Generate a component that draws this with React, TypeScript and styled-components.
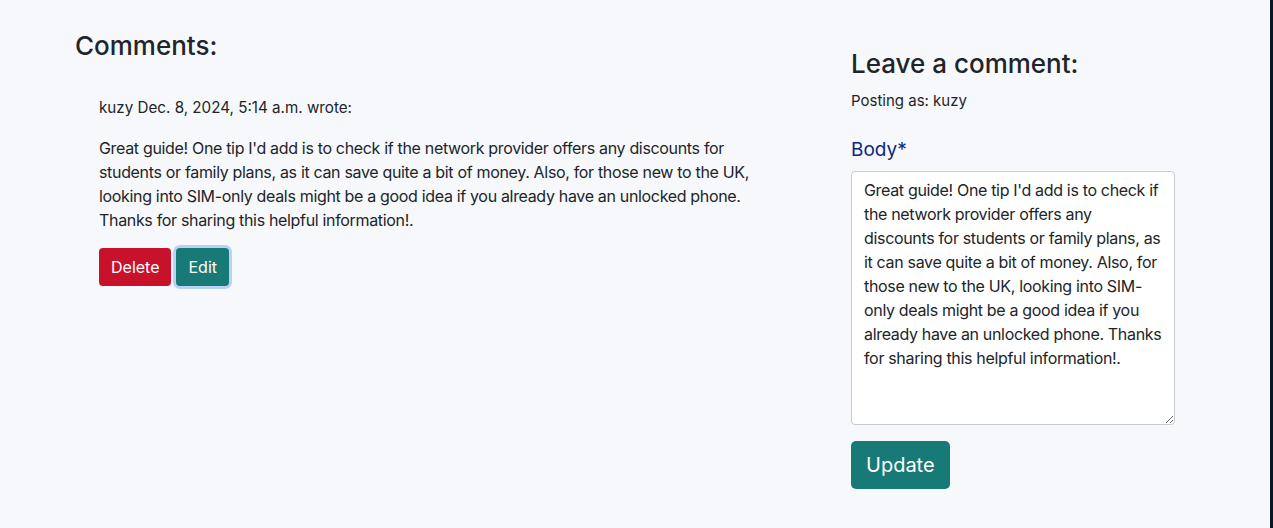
import React from "react";
import styled, { createGlobalStyle } from "styled-components";

const Global = createGlobalStyle`
  html, body { margin: 0; padding: 0; }
  body {
    background: #f7f8fc;
    font-family: Inter, "Liberation Sans", Arial, sans-serif;
    color: #212529;
    height: 528px;
    overflow: hidden;
  }
`;

const Page = styled.div`
  display: flex;
  height: 528px;
  box-sizing: border-box;
  border-right: 3px solid #0b1620;
`;

const Left = styled.section`
  width: 851px;
  padding: 30px 0 0 75px;
  box-sizing: border-box;
`;

const Right = styled.section`
  width: 324px;
  padding-top: 48px;
  box-sizing: border-box;
`;

const Heading = styled.h3`
  margin: 0;
  font-size: 26px;
  font-weight: 500;
  line-height: 1.2;
  color: #212529;
`;

const Comment = styled.div`
  padding: 35px 0 0 24px;
`;

const Meta = styled.p`
  margin: 0 0 16px;
  font-size: 15.2px;
  line-height: 24px;
`;

const Body = styled.p`
  margin: 0 0 16px;
  font-size: 16px;
  line-height: 24px;
  letter-spacing: -0.33px;
  max-width: 684px;
`;

const Actions = styled.div`
  display: flex;
  gap: 5px;
`;

const Btn = styled.button<{ $variant: "danger" | "teal"; $focus?: boolean }>`
  font-family: inherit;
  font-size: 16px;
  line-height: 24px;
  padding: 7px 12px;
  border: none;
  border-radius: 4px;
  color: #fff;
  background: ${(p) => (p.$variant === "danger" ? "#c8122c" : "#177a76")};
  box-shadow: ${(p) => (p.$focus ? "0 0 0 3px #b9d3f5" : "none")};
  cursor: pointer;
`;

const Posting = styled.p`
  margin: 11px 0 0;
  font-size: 15px;
  line-height: 22px;
`;

const Label = styled.label`
  display: block;
  margin-top: 25px;
  font-size: 19px;
  line-height: 26px;
  color: #0b2580;
`;

const TextArea = styled.textarea`
  display: block;
  margin-top: 8px;
  width: 324px;
  height: 254px;
  box-sizing: border-box;
  padding: 6px 8px 6px 12px;
  border: 1px solid #c8ccd2;
  border-radius: 4px;
  background: #fff;
  font-family: inherit;
  font-size: 16px;
  line-height: 24px;
  letter-spacing: -0.33px;
  color: #212529;
  resize: vertical;
  outline: none;
`;

const BigBtn = styled.button`
  margin-top: 16px;
  font-family: inherit;
  font-size: 20px;
  line-height: 30px;
  padding: 9px 15px;
  border: none;
  border-radius: 5px;
  color: #fff;
  background: #177a76;
`;

const text =
  "Great guide! One tip I'd add is to check if the network provider offers any discounts for students or family plans, as it can save quite a bit of money. Also, for those new to the UK, looking into SIM-only deals might be a good idea if you already have an unlocked phone. Thanks for sharing this helpful information!.";

export default function App() {
  return (
    <>
      <Global />
      <Page>
        <Left>
          <Heading>Comments:</Heading>
          <Comment>
            <Meta>kuzy Dec. 8, 2024, 5:14 a.m. wrote:</Meta>
            <Body>{text}</Body>
            <Actions>
              <Btn $variant="danger">Delete</Btn>
              <Btn $variant="teal" $focus>Edit</Btn>
            </Actions>
          </Comment>
        </Left>
        <Right>
          <Heading>Leave a comment:</Heading>
          <Posting>Posting as: kuzy</Posting>
          <Label htmlFor="body">Body*</Label>
          <TextArea id="body" defaultValue={text} />
          <BigBtn>Update</BigBtn>
        </Right>
      </Page>
    </>
  );
}
